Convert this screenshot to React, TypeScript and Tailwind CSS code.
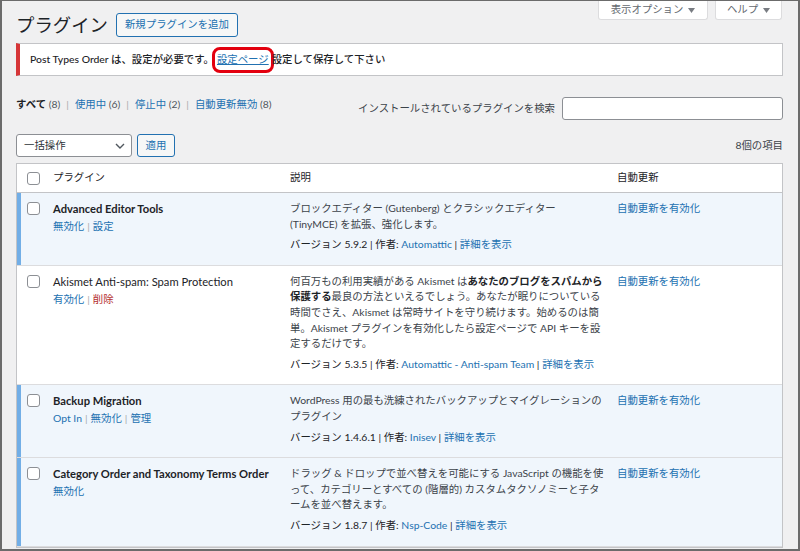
import React from 'react';

type Plugin = {
  name: string;
  active: boolean;
  actions: { label: string; danger?: boolean }[];
  desc: React.ReactNode[];
  version: string;
  author: string;
};

const plugins: Plugin[] = [
  {
    name: 'Advanced Editor Tools',
    active: true,
    actions: [{ label: '無効化' }, { label: '設定' }],
    desc: ['ブロックエディター (Gutenberg) とクラシックエディター', '(TinyMCE) を拡張、強化します。'],
    version: '5.9.2',
    author: 'Automattic',
  },
  {
    name: 'Akismet Anti-spam: Spam Protection',
    active: false,
    actions: [{ label: '有効化' }, { label: '削除', danger: true }],
    desc: [
      <>何百万もの利用実績がある Akismet は<b className="font-bold text-[#1d2327]">あなたのブログをスパムから</b></>,
      <><b className="font-bold text-[#1d2327]">保護する</b>最良の方法といえるでしょう。あなたが眠りについている</>,
      '時間でさえ、Akismet は常時サイトを守り続けます。始めるのは簡',
      '単。Akismet プラグインを有効化したら設定ページで API キーを設',
      '定するだけです。',
    ],
    version: '5.3.5',
    author: 'Automattic - Anti-spam Team',
  },
  {
    name: 'Backup Migration',
    active: true,
    actions: [{ label: 'Opt In' }, { label: '無効化' }, { label: '管理' }],
    desc: ['WordPress 用の最も洗練されたバックアップとマイグレーションの', 'プラグイン'],
    version: '1.4.6.1',
    author: 'Inisev',
  },
  {
    name: 'Category Order and Taxonomy Terms Order',
    active: true,
    actions: [{ label: '無効化' }],
    desc: [
      'ドラッグ & ドロップで並べ替えを可能にする JavaScript の機能を使',
      'って、カテゴリーとすべての (階層的) カスタムタクソノミーと子タ',
      'ームを並べ替えます。',
    ],
    version: '1.8.7',
    author: 'Nsp-Code',
  },
];

function Checkbox() {
  return <span className="block w-[13px] h-[13px] border border-[#8c8f94] rounded-[3px] bg-white" />;
}

function Caret() {
  return (
    <svg width="7" height="5" viewBox="0 0 7 5" className="ml-[5px]">
      <path d="M0 0h7L3.5 5z" fill="#787c82" />
    </svg>
  );
}

function Sep() {
  return <span className="text-[#a7aaad] mx-[3px]">|</span>;
}

function FilterSep() {
  return <span className="text-[#a7aaad] mx-[6px]">|</span>;
}

export default function App() {
  return (
    <div className="w-[800px] h-[551px] overflow-hidden bg-[#f0f0f1] border-t border-l-2 border-r-2 border-b-2 border-[#6b6b6b] font-['Lato','Noto_Sans_CJK_JP',sans-serif] text-[10.4px] text-[#3c434a]">
      {/* header */}
      <div className="flex items-start pl-[14px] pr-[16px]">
        <div className="flex items-center gap-[8px] pt-[12px]">
          <h1 className="text-[18.4px] leading-[24px] text-[#1d2327]">プラグイン</h1>
          <button className="h-[24px] px-[8px] border border-[#2271b1] rounded-[3px] bg-[#f6f7f7] text-[#2271b1] text-[10.4px]">
            新規プラグインを追加
          </button>
        </div>
        <div className="ml-auto flex gap-[7px]">
          <button className="h-[19px] w-[110px] flex items-center justify-center bg-white border border-t-0 border-[#dcdcde] rounded-b-[3px] text-[#646970]">
            表示オプション<Caret />
          </button>
          <button className="h-[19px] w-[67px] flex items-center justify-center bg-white border border-t-0 border-[#dcdcde] rounded-b-[3px] text-[#646970]">
            ヘルプ<Caret />
          </button>
        </div>
      </div>

      <div className="pl-[14px] pr-[15px]">
        {/* notice */}
        <div className="mt-[6px] h-[33px] flex items-center bg-white border border-[#c3c4c7] border-l-4 border-l-[#d63638] pl-[10px] pt-[1px] text-[#1d2327] font-medium">
          Post Types Order は、設定が必要です。
          <a className="text-[#2271b1] font-normal underline mx-[3px] rounded-[3px] outline-[3px] outline-[#e3000f] outline-offset-[2px]">設定ページ</a>
          設定して保存して下さい
        </div>

        {/* filters + search */}
        <div className="mt-[20px] flex items-start">
          <div className="leading-[16px] text-[#50575e]">
            <b className="text-[#1d2327] font-bold">すべて</b> (8)<FilterSep />
            <a className="text-[#2271b1]">使用中</a> (6)<FilterSep />
            <a className="text-[#2271b1]">停止中</a> (2)<FilterSep />
            <a className="text-[#2271b1]">自動更新無効</a> (8)
          </div>
          <div className="ml-auto pt-[1px] flex items-center gap-[7px]">
            <span className="text-[#3c434a]">インストールされているプラグインを検索</span>
            <span className="block w-[221px] h-[23px] bg-white border border-[#8c8f94] rounded-[3px]" />
          </div>
        </div>

        {/* bulk */}
        <div className="mt-[14px] flex items-center">
          <div className="w-[116px] h-[23px] bg-white border border-[#8c8f94] rounded-[3px] flex items-center pl-[7px] pr-[6px] text-[#2c3338]">
            一括操作
            <svg width="10" height="6" viewBox="0 0 10 6" className="ml-auto">
              <path d="M1 1l4 4 4-4" fill="none" stroke="#50575e" strokeWidth="1.4" />
            </svg>
          </div>
          <button className="ml-[5px] h-[23px] w-[38px] border border-[#2271b1] rounded-[3px] bg-[#f6f7f7] text-[#2271b1]">
            適用
          </button>
          <span className="ml-auto text-[#3c434a]">8個の項目</span>
        </div>

        {/* table */}
        <div className="mt-[6px] bg-white border border-[#c3c4c7]">
          <div className="flex h-[29px] items-center border-b border-[#c3c4c7] text-[#1d2327]">
            <div className="w-[28px] shrink-0 pl-[10px]"><Checkbox /></div>
            <div className="w-[237px] shrink-0 pl-[8px]">プラグイン</div>
            <div className="w-[327px] shrink-0 pl-[8px]">説明</div>
            <div className="pl-[8px]">自動更新</div>
          </div>
          {plugins.map((p, i) => (
            <div
              key={i}
              className={`flex border-b border-[#dcdcde] ${p.active ? 'bg-[#f0f6fc]' : 'bg-white'}`}
            >
              <div className={`w-[28px] shrink-0 border-l-4 pl-[6px] pt-[9px] ${p.active ? 'border-[#72aee6]' : 'border-transparent'}`}>
                <Checkbox />
              </div>
              <div className="w-[237px] shrink-0 pl-[8px] pt-[7px]">
                <div className={`text-[11.2px] leading-[17px] text-[#1d2327] whitespace-nowrap ${p.active ? 'font-bold' : 'font-normal'}`}>{p.name}</div>
                <div className="pt-[2px] leading-[15.6px]">
                  {p.actions.map((a, j) => (
                    <React.Fragment key={j}>
                      {j > 0 && <Sep />}
                      <a className={a.danger ? 'text-[#b32d2e]' : 'text-[#2271b1]'}>{a.label}</a>
                    </React.Fragment>
                  ))}
                </div>
              </div>
              <div className="w-[327px] shrink-0 pl-[8px] pt-[8px] pb-[12px]">
                <p className="leading-[15.6px] mb-[5px] whitespace-nowrap">
                  {p.desc.map((d, j) => (
                    <React.Fragment key={j}>
                      {j > 0 && <br />}
                      {d}
                    </React.Fragment>
                  ))}
                </p>
                <div className="leading-[15.6px] text-[#1d2327] whitespace-nowrap">
                  バージョン {p.version} | 作者: <a className="text-[#2271b1]">{p.author}</a> | <a className="text-[#2271b1]">詳細を表示</a>
                </div>
              </div>
              <div className="pl-[8px] pt-[8px] leading-[15.6px]">
                <a className="text-[#2271b1]">自動更新を有効化</a>
              </div>
            </div>
          ))}
        </div>
      </div>
    </div>
  );
}
